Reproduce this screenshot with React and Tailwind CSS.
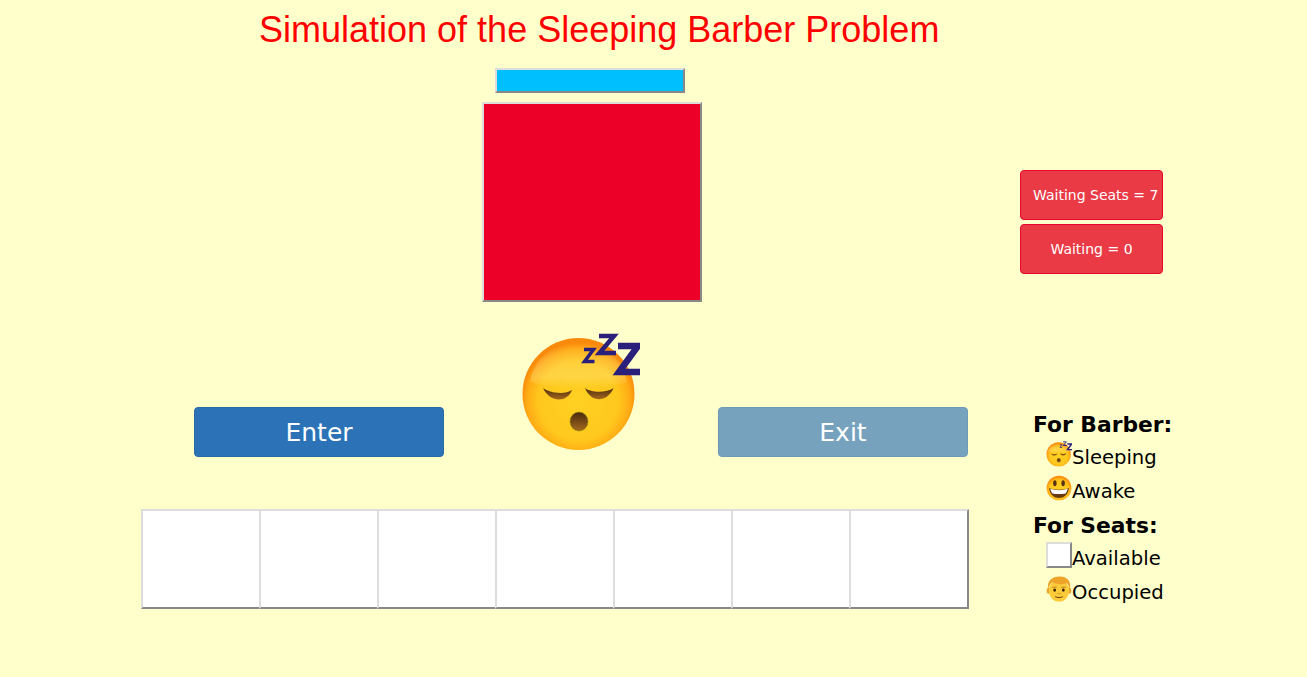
import React from "react";

const SEATS = [1, 2, 3, 4, 5, 6, 7];

const FaceDefs = ({ id }) => (
  <defs>
    <radialGradient id={`${id}-skin`} cx="50%" cy="56%" r="52%">
      <stop offset="0%" stopColor="#ffd021" />
      <stop offset="68%" stopColor="#ffc81e" />
      <stop offset="88%" stopColor="#ffac14" />
      <stop offset="100%" stopColor="#f98a0c" />
    </radialGradient>
    <linearGradient id={`${id}-shine`} x1="0" y1="0" x2="0" y2="1">
      <stop offset="0%" stopColor="#ffffff" stopOpacity="0" />
      <stop offset="75%" stopColor="#fff0a0" stopOpacity="0.28" />
      <stop offset="100%" stopColor="#fff0a0" stopOpacity="0" />
    </linearGradient>
    <linearGradient id={`${id}-brown`} x1="0" y1="0" x2="0" y2="1">
      <stop offset="0%" stopColor="#4a2a0c" />
      <stop offset="100%" stopColor="#a5691f" />
    </linearGradient>
  </defs>
);

const SleepingFace = ({ id, className }) => (
  <svg viewBox="0 0 120 120" className={className}>
    <FaceDefs id={id} />
    <circle cx="58.5" cy="62" r="56" fill={`url(#${id}-skin)`} />
    <path d="M10 50 C 14 24, 36 12, 58 12 C 82 12, 102 24, 107 50 C 84 58, 34 58, 10 50 Z" fill={`url(#${id}-shine)`} />
    <path d="M23 56 C 29 61, 45 63, 52 58 C 47 71, 30 71, 23 56 Z" fill={`url(#${id}-brown)`} />
    <path d="M65 56 C 71 61, 87 61, 93.500 56 C 87 71, 71 71, 65 56 Z" fill={`url(#${id}-brown)`} />
    <ellipse cx="59" cy="89.500" rx="9" ry="9.500" fill={`url(#${id}-brown)`} stroke="#8a8a10" strokeWidth="0.6" />
    <g fill="none" stroke="#2b1f7c" strokeLinejoin="miter">
      <polyline points="64,17.500 73.500,17.500 64.500,29.500 74.500,29.500" strokeWidth="3.500" />
      <polyline points="79,4 94,4 79.500,21 96,21" strokeWidth="4.500" />
      <polyline points="98,14 118,14 99,40 120,40" strokeWidth="6.500" />
    </g>
  </svg>
);

const AwakeFace = ({ id, className }) => (
  <svg viewBox="0 0 120 120" className={className}>
    <FaceDefs id={id} />
    <circle cx="60" cy="60" r="57" fill={`url(#${id}-skin)`} />
    <ellipse cx="41" cy="38" rx="8" ry="14" fill="#5a3410" />
    <ellipse cx="79" cy="38" rx="8" ry="14" fill="#5a3410" />
    <path d="M14 60 C 36 70, 84 70, 106 60 C 102 92, 82 106, 60 106 C 38 106, 18 92, 14 60 Z" fill="#6a3a12" />
    <path d="M20 64 C 40 72, 80 72, 100 64 C 98 74, 95 80, 90 85 C 72 89, 48 89, 30 85 C 25 80, 22 74, 20 64 Z" fill="#ffffff" />
  </svg>
);

const BoyFace = ({ className }) => (
  <svg viewBox="0 0 120 120" className={className}>
    <ellipse cx="12" cy="68" rx="9" ry="14" fill="#e8a52f" />
    <ellipse cx="108" cy="68" rx="9" ry="14" fill="#e8a52f" />
    <ellipse cx="60" cy="68" rx="47" ry="50" fill="#fbcb3a" />
    <path d="M10 60 C 2 22, 30 0, 66 2 C 100 3, 118 26, 110 60 C 107 50, 103 42, 97 34 C 72 42, 42 38, 28 28 C 20 38, 13 48, 10 60 Z" fill="#eea428" />
    <rect x="28" y="50" width="22" height="4" rx="2" fill="#b97d1e" />
    <rect x="70" y="50" width="22" height="4" rx="2" fill="#b97d1e" />
    <ellipse cx="40" cy="65" rx="6.500" ry="7.500" fill="#3c2208" />
    <ellipse cx="80" cy="65" rx="6.500" ry="7.500" fill="#3c2208" />
    <path d="M52 80 C 56 84, 64 84, 68 80" fill="none" stroke="#c58a25" strokeWidth="3" strokeLinecap="round" />
    <path d="M44 96 C 52 101, 68 101, 76 96" fill="none" stroke="#6b3d10" strokeWidth="4.500" strokeLinecap="round" />
  </svg>
);

const StatusBadge = ({ children }) => (
  <div className="h-[50px] w-[143px] rounded-[4px] border border-[#e8062c] bg-[#e93a45] px-3 text-center text-[14px] leading-[48px] whitespace-nowrap text-white">
    {children}
  </div>
);

const LegendRow = ({ icon, label }) => (
  <div className="flex h-[34px] items-center pl-[13px] text-[19.6px] text-black">
    <span className="flex h-[26px] w-[26px] -translate-y-[3px] shrink-0 items-center justify-center">{icon}</span>
    <span className="translate-y-[1px]">{label}</span>
  </div>
);

const ActionButton = ({ children, className }) => (
  <button className={`h-[50px] w-[250px] rounded-[4px] border pt-[1px] text-[25px] text-white ${className}`}>{children}</button>
);

export default function App() {
  return (
    <div className="flex h-[677px] overflow-hidden bg-[#ffffcc] font-['DejaVu_Sans',sans-serif]">
      {/* Simulation area */}
      <div className="w-[1020px] shrink-0 pl-[141px]">
        <h1 className="ml-[118px] h-[68px] pt-[9px] font-['Liberation_Sans',sans-serif] text-[36px] leading-[41px] font-normal whitespace-nowrap text-[#ff0000]">
          Simulation of the Sleeping Barber Problem
        </h1>

        <div className="ml-[354px] h-[25px] w-[190px] border-2 border-t-[#dddddd] border-r-[#888888] border-b-[#888888] border-l-[#dddddd] bg-[#00bfff]" />

        <div className="mt-[9px] ml-[341px] h-[200px] w-[220px] border-2 border-t-[#dddddd] border-r-[#888888] border-b-[#888888] border-l-[#dddddd] bg-[#ec0027]" />

        <div className="mt-[30px] ml-[53px] flex h-[125px] items-end">
          <ActionButton className="border-[#2a6aa5] bg-[#2c72b7]">Enter</ActionButton>
          <div className="mb-[5px] ml-[76px] h-[120px] w-[120px]">
            <SleepingFace id="big" className="h-[120px] w-[120px]" />
          </div>
          <ActionButton className="ml-[78px] border-[#6f9ab6] bg-[#76a2be]">Exit</ActionButton>
        </div>

        {/* Waiting seats */}
        <div className="mt-[52px] flex">
          {SEATS.map((seat) => (
            <div
              key={seat}
              className={`h-[100px] border-2 border-t-[#dddddd] border-b-[#888888] border-l-[#dddddd] bg-white ${
                seat === 7 ? "w-[120px] border-r-[#888888]" : "w-[118px] border-r-0"
              }`}
            />
          ))}
        </div>
      </div>

      {/* Counters and legend */}
      <div className="w-[200px] pt-[170px]">
        <div className="flex flex-col gap-1">
          <StatusBadge>Waiting Seats = 7</StatusBadge>
          <StatusBadge>Waiting = 0</StatusBadge>
        </div>

        <div className="mt-[134px] pl-[13px]">
          <div className="h-[32px] text-[21.8px] leading-[34px] font-bold text-black">For Barber:</div>
          <LegendRow icon={<SleepingFace id="small" className="h-[26px] w-[26px]" />} label="Sleeping" />
          <LegendRow icon={<AwakeFace id="awake" className="h-[26px] w-[26px]" />} label="Awake" />
          <div className="mt-[1px] h-[32px] text-[21.8px] leading-[34px] font-bold text-black">For Seats:</div>
          <LegendRow
            icon={
              <span className="block h-[26px] w-[26px] border-2 border-t-[#dddddd] border-r-[#888888] border-b-[#888888] border-l-[#dddddd] bg-white" />
            }
            label="Available"
          />
          <LegendRow icon={<BoyFace className="h-[26px] w-[26px]" />} label="Occupied" />
        </div>
      </div>
    </div>
  );
}
